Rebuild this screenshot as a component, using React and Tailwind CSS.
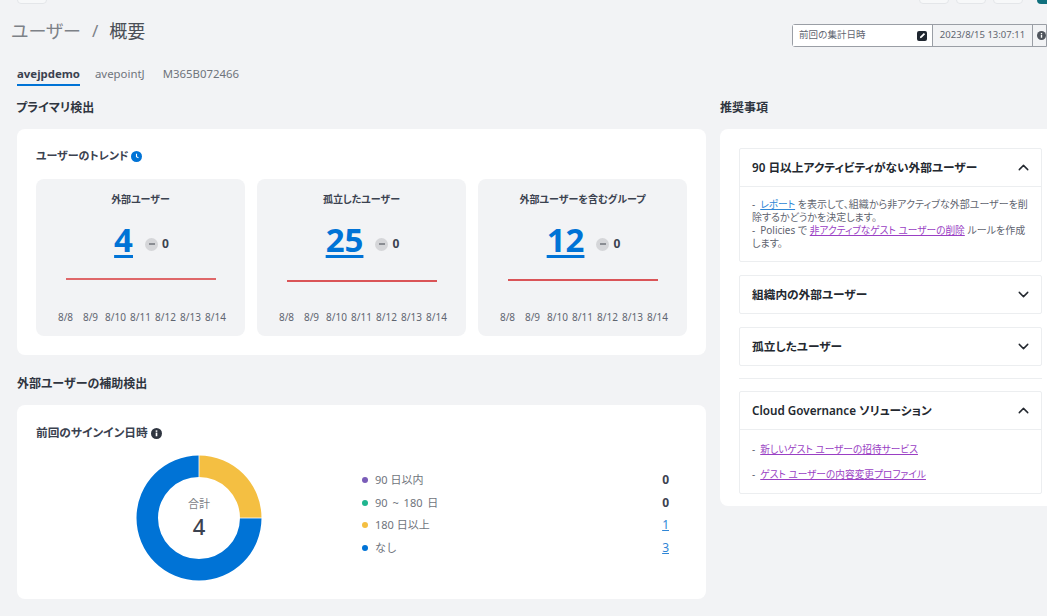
import React from "react";
import { ChevronDown, ChevronUp } from "lucide-react";

const days = ["8/8", "8/9", "8/10", "8/11", "8/12", "8/13", "8/14"];

const trends = [
  { title: "外部ユーザー", value: "4", lineY: 3, stroke: "#d9383a" },
  { title: "孤立したユーザー", value: "25", lineY: 5, stroke: "#d21f22" },
  { title: "外部ユーザーを含むグループ", value: "12", lineY: 4, stroke: "#d21f22" },
];

const legend = [
  { label: "90 日以内", value: "0", dot: "bg-[#7a5cb8]" },
  { label: "90 ~ 180 日", value: "0", dot: "bg-[#1fb58f]", wide: true },
  { label: "180 日以上", value: "1", dot: "bg-[#f4bf42]", link: true },
  { label: "なし", value: "3", dot: "bg-[#0073d6]", link: true },
];

function InfoDot({ className }) {
  return (
    <svg viewBox="0 0 12 12" className={className}>
      <circle cx="6" cy="6" r="6" fill="currentColor" />
      <rect x="5.1" y="5" width="1.8" height="4" fill="#fff" />
      <rect x="5.1" y="2.6" width="1.8" height="1.6" fill="#fff" />
    </svg>
  );
}

function TrendCard({ item }) {
  return (
    <div className="flex h-[157px] w-[209px] flex-col items-center rounded-lg bg-[#f2f3f5] pt-[12px]">
      <div className="h-[16px] text-[10px] font-semibold leading-[16px] text-[#3b4250] [font-feature-settings:'palt']">{item.title}</div>
      <div className="mt-[13px] flex h-[40px] items-center gap-[12px] pl-[2px]">
        <a className="text-[33px] font-bold leading-[38px] text-[#0073d6] underline underline-offset-[3px]">{item.value}</a>
        <div className="mt-[8px] flex items-center gap-[4px]">
          <span className="flex h-[13px] w-[13px] items-center justify-center rounded-full bg-[#d5d6d9]">
            <span className="h-[2px] w-[6px] bg-[#8a8d93]" />
          </span>
          <span className="text-[12px] font-bold text-[#3b4250]">0</span>
        </div>
      </div>
      <svg viewBox="0 0 150 8" className="mt-[16px] h-[8px] w-[150px]">
        <line x1="0" x2="150" y1={item.lineY} y2={item.lineY} stroke={item.stroke} strokeWidth="1.5" />
      </svg>
      <div className="mt-[26px] flex">
        {days.map((d) => (
          <span key={d} className="w-[25px] whitespace-nowrap text-center text-[10px] leading-[14px] text-[#5f6570]">{d}</span>
        ))}
      </div>
    </div>
  );
}

function Accordion({ title, open, children }) {
  return (
    <div className="w-[303px] rounded-[2px] border border-[#eceef0] bg-white">
      <div className="flex h-[37px] items-center justify-between pl-[12px] pr-[9px]">
        <span className="text-[11.7px] font-semibold text-[#23282f] [font-feature-settings:'palt']">{title}</span>
        {open ? <ChevronUp className="h-[17px] w-[17px] text-[#23282f]" /> : <ChevronDown className="h-[17px] w-[17px] text-[#23282f]" />}
      </div>
      {open && <div className="border-t border-[#eceef0] px-[12px] text-[10px] text-[#5f6570] [font-feature-settings:'palt']">{children}</div>}
    </div>
  );
}

function PurpleLink({ children }) {
  return <a className="text-[9.7px] text-[#9a3fc4] underline">{children}</a>;
}

function Dash() {
  return <span className="mr-[5px]">-</span>;
}

export default function App() {
  return (
    <div className="h-[616px] w-[1047px] overflow-hidden bg-[#f2f3f5] font-['Noto_Sans','Noto_Sans_CJK_JP',sans-serif]">
      {/* cut off toolbar */}
      <div className="flex h-[4px] items-end overflow-hidden pl-[17px] pr-0">
        <div className="h-[6px] w-[30px] rounded-b border border-[#e4e6e9] bg-[#f7f8f9]" />
        <div className="ml-auto flex gap-[7px]">
          <div className="h-[6px] w-[30px] rounded-b border border-[#e4e6e9] bg-[#f7f8f9]" />
          <div className="h-[6px] w-[30px] rounded-b border border-[#e4e6e9] bg-[#f7f8f9]" />
          <div className="h-[6px] w-[30px] rounded-b border border-[#e4e6e9] bg-[#f7f8f9]" />
        </div>
        <div className="ml-[14px] h-[6px] w-[10px] rounded-bl bg-[#0f6f7d]" />
      </div>

      <div className="flex h-[42px] items-start justify-between pl-[11px]">
        <div className="mt-[14px] flex items-center text-[18px] leading-[26px] text-[#7d8187]">
          <span className="[font-feature-settings:'palt']">ユーザー</span>
          <span className="mx-[11px] text-[17px]">/</span>
          <span className="text-[#4a4f57]">概要</span>
        </div>
        <div className="mt-[20px] flex h-[23px] w-[255px] shrink-0 rounded-l-[3px] border border-[#9a9ea5] text-[9.5px] text-[#5f6570]">
          <div className="flex w-[139px] items-center justify-between bg-white pl-[6px] pr-[5px]">
            <span>前回の集計日時</span>
            <span className="flex h-[10px] w-[10px] items-center justify-center rounded-[2px] bg-[#1f2630]">
              <svg viewBox="0 0 8 8" className="h-[7px] w-[7px]"><path d="M1 7l.5-2L5.5 1 7 2.5 3 6.5z" fill="#fff" /></svg>
            </span>
          </div>
          <div className="flex w-[101px] items-center justify-center border-x border-[#9a9ea5]">2023/8/15 13:07:11</div>
          <div className="flex flex-1 items-center pl-[4px]"><InfoDot className="h-[9px] w-[9px] shrink-0 text-[#50555d]" /></div>
        </div>
      </div>

      <div className="mt-[20px] flex gap-[15px] pl-[17px] text-[11.4px] leading-[16px] text-[#6f747c]">
        <div className="h-[20px] border-b-2 border-[#0073d6] font-bold text-[#3b4250]">avejpdemo</div>
        <div>avepointJ</div>
        <div className="ml-[3px]">M365B072466</div>
      </div>

      <div className="mt-[12px] flex items-start">
        <div className="ml-[16px] w-[690px] shrink-0">
          <h2 className="h-[20px] text-[12px] font-semibold leading-[20px] text-[#2f3540] [font-feature-settings:'palt']">プライマリ検出</h2>
          <section className="ml-[1px] mt-[11px] h-[226px] w-[689px] rounded-lg bg-white px-[19px] pt-[17px]">
            <div className="flex h-[20px] items-center gap-[2px] text-[11px] font-semibold text-[#3b4250] [font-feature-settings:'palt']">
              ユーザーのトレンド
              <svg viewBox="0 0 12 12" className="h-[11px] w-[11px]">
                <circle cx="6" cy="6" r="6" fill="#0073d6" />
                <path d="M6 3v3.2l2.2 1.3" stroke="#fff" strokeWidth="1.2" fill="none" />
              </svg>
            </div>
            <div className="mt-[13px] flex gap-[12px]">
              {trends.map((t) => <TrendCard key={t.title} item={t} />)}
            </div>
          </section>

          <h2 className="ml-[1px] mt-[19px] h-[20px] text-[12px] font-semibold leading-[20px] text-[#2f3540] [font-feature-settings:'palt']">外部ユーザーの補助検出</h2>
          <section className="ml-[1px] mt-[11px] h-[194px] w-[689px] rounded-lg bg-white pl-[19px] pt-[18px]">
            <div className="flex h-[20px] items-center gap-[3px] text-[11.7px] font-semibold text-[#3b4250] [font-feature-settings:'palt']">
              前回のサインイン日時
              <InfoDot className="h-[11px] w-[11px] text-[#2f3540]" />
            </div>
            <div className="mt-[12px] flex">
              <div className="relative ml-[100px] h-[126px] w-[126px] shrink-0">
                <svg viewBox="0 0 126 126" className="h-[126px] w-[126px]">
                  <path d="M125.5 63A62.5 62.5 0 1 1 63 0.5V22A41 41 0 1 0 104 63Z" fill="#0073d6" />
                  <path d="M63 0.5A62.5 62.5 0 0 1 125.5 63H104A41 41 0 0 0 63 22Z" fill="#f4bf42" />
                  <path d="M63 0v22M104 63h22" stroke="#fff" strokeWidth="0.8" />
                </svg>
                <div className="absolute inset-0 flex flex-col items-center justify-center pb-[3px]">
                  <span className="text-[11px] leading-[16px] text-[#7d8187]">合計</span>
                  <span className="mt-[2px] text-[22px] font-medium leading-[24px] text-[#3b4250]">4</span>
                </div>
              </div>
              <div className="ml-[100px] mt-[14px] w-[307px]">
                {legend.map((l) => (
                  <div key={l.label} className="flex h-[22.5px] items-center text-[11px]">
                    <span className={`h-[6px] w-[6px] rounded-full ${l.dot}`} />
                    <span className={l.wide ? "ml-[7px] text-[#6f747c] [word-spacing:2px]" : "ml-[7px] text-[#6f747c]"}>{l.label}</span>
                    {l.link
                      ? <a className="ml-auto text-[12px] text-[#2f86d6] underline">{l.value}</a>
                      : <span className="ml-auto text-[12px] font-bold text-[#3b4250]">{l.value}</span>}
                  </div>
                ))}
              </div>
            </div>
          </section>
        </div>

        <div className="ml-[14px] w-[327px] shrink-0">
          <h2 className="h-[20px] text-[12px] font-semibold leading-[20px] text-[#2f3540]">推奨事項</h2>
          <section className="mt-[11px] h-[377px] rounded-l-lg bg-white pl-[19px] pt-[19px]">
            <Accordion title="90 日以上アクティビティがない外部ユーザー" open>
              <div className="pb-[11px] pt-[11px] leading-[13px]">
                <Dash /><a className="text-[9.7px] text-[#2f86d6] underline">レポート</a> を表示して、組織から非アクティブな外部ユーザーを削除するかどうかを決定します。<br />
                <Dash />Policies で <PurpleLink>非アクティブなゲスト ユーザーの削除</PurpleLink> ルールを作成します。
              </div>
            </Accordion>
            <div className="mt-[13px]"><Accordion title="組織内の外部ユーザー" /></div>
            <div className="mt-[13px]"><Accordion title="孤立したユーザー" /></div>
            <div className="my-[12px] h-px w-[303px] bg-[#eceef0]" />
            <Accordion title="Cloud Governance ソリューション" open>
              <div className="pt-[12px] leading-[14px]"><Dash /><PurpleLink>新しいゲスト ユーザーの招待サービス</PurpleLink></div>
              <div className="pb-[11px] pt-[10px] leading-[14px]"><Dash /><PurpleLink>ゲスト ユーザーの内容変更プロファイル</PurpleLink></div>
            </Accordion>
          </section>
        </div>
      </div>
    </div>
  );
}
